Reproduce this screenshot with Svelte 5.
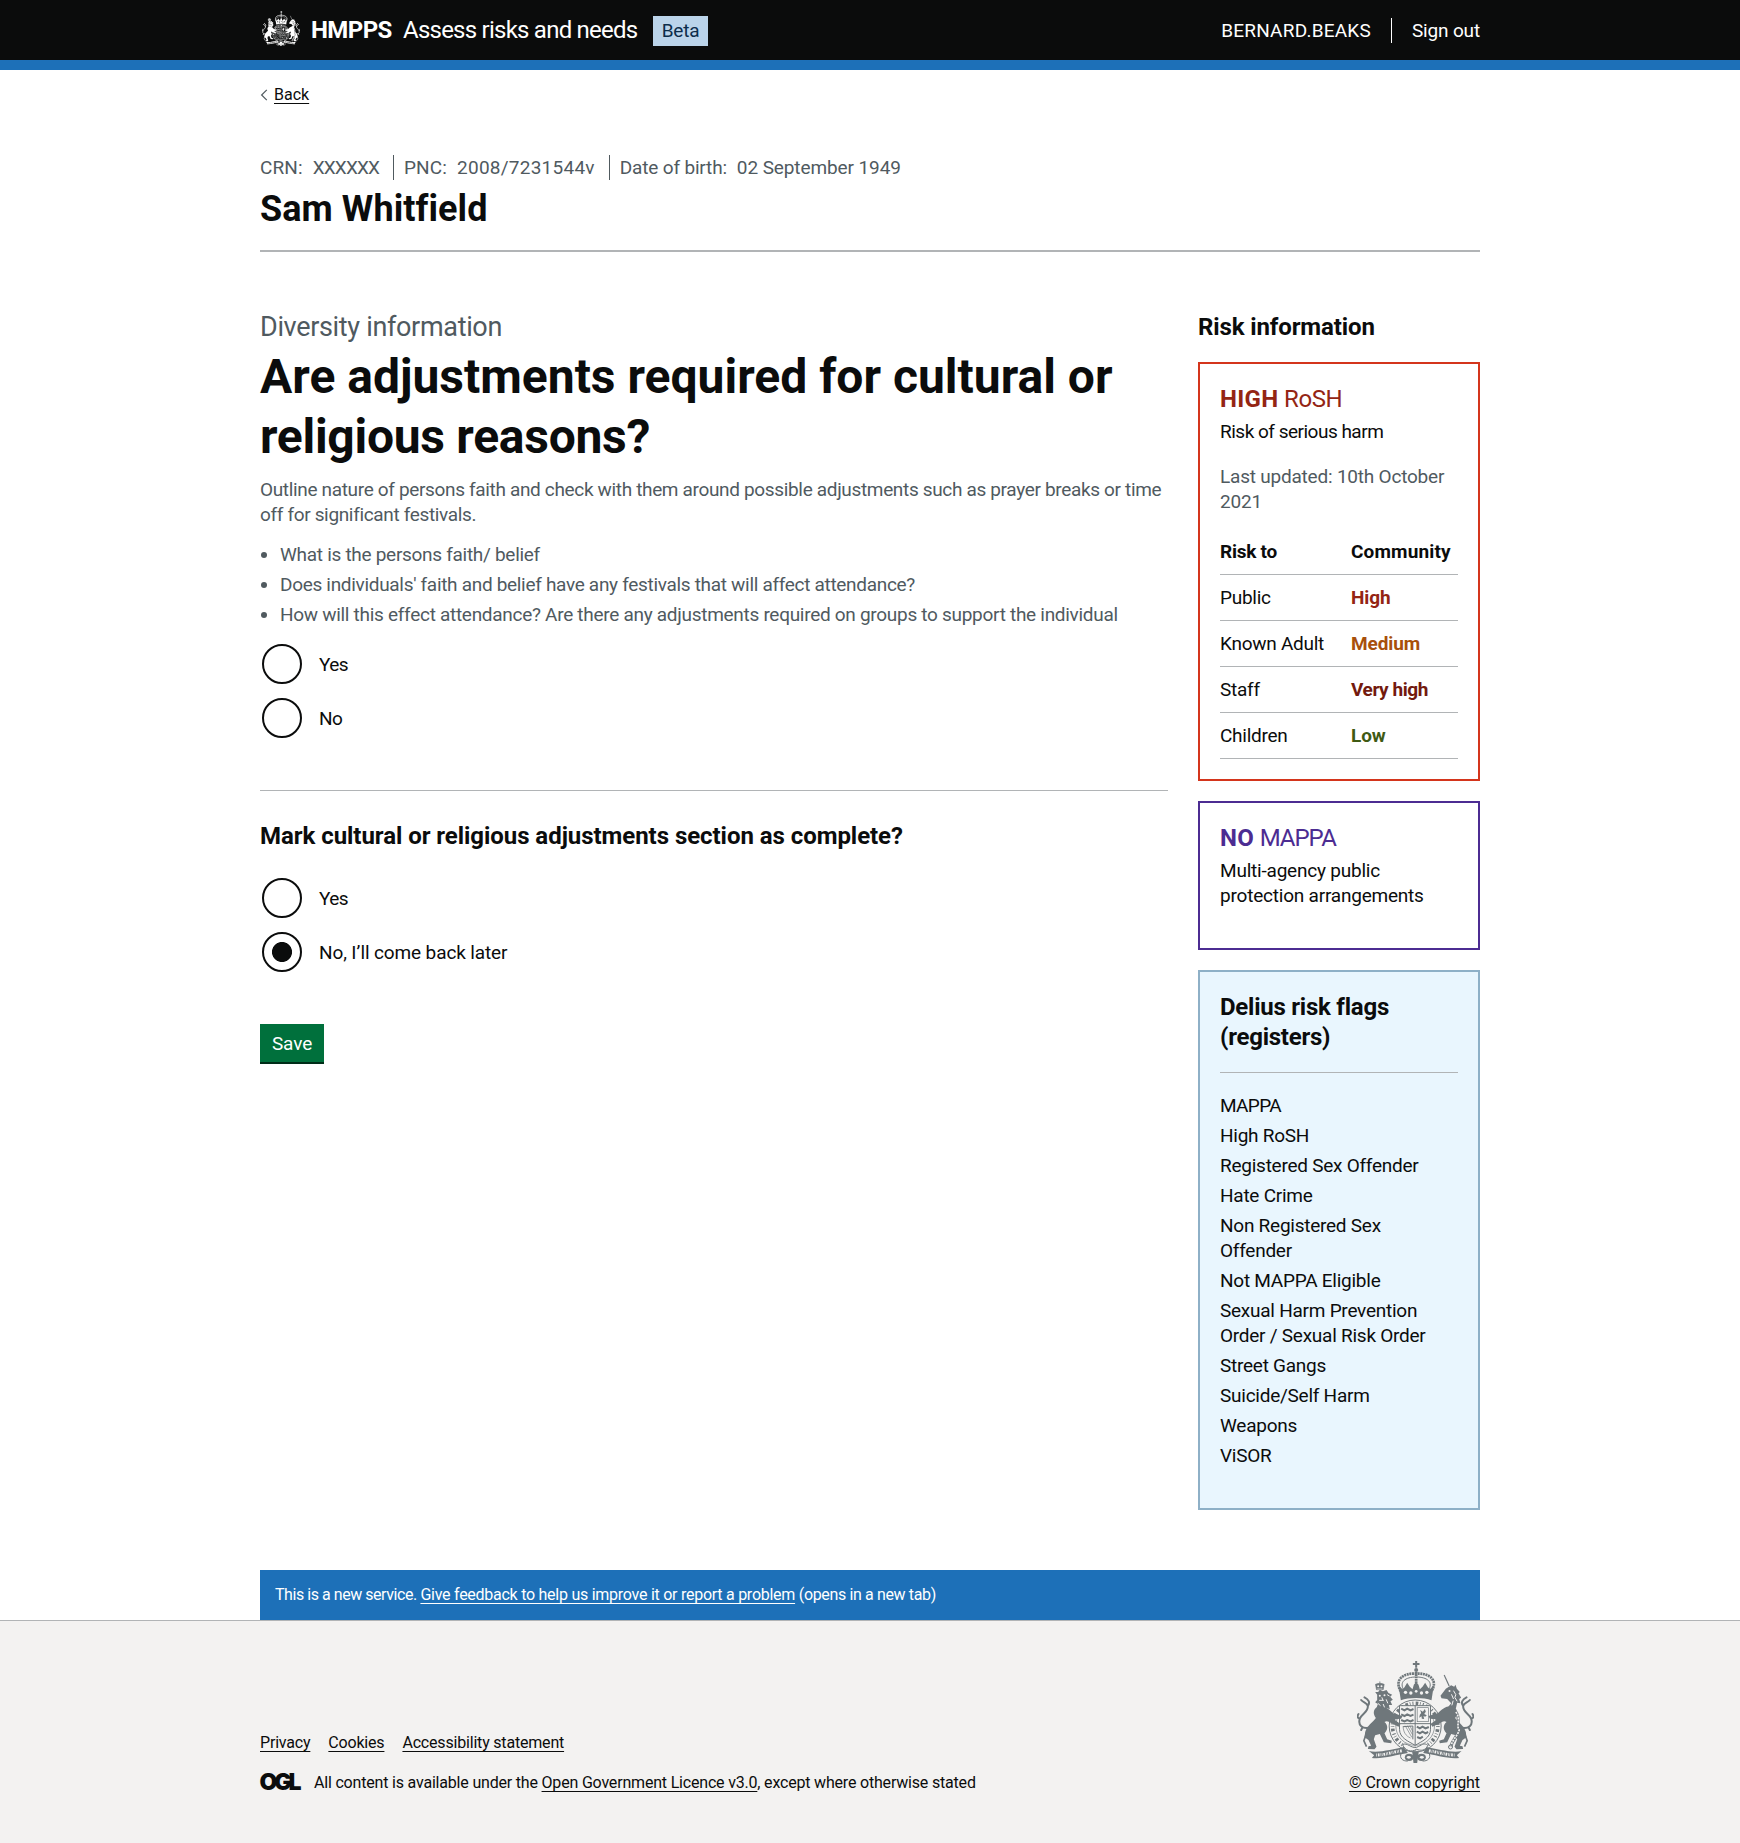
<script>
  let adjustments = $state('');
  let complete = $state('later');

  const hints = [
    { text: 'What is the persons faith/ belief', cls: '' },
    { text: "Does individuals' faith and belief have any festivals that will affect attendance?", cls: 'mid' },
    { text: 'How will this effect attendance? Are there any adjustments required on groups to support the individual', cls: '' }
  ];
  const risks = [
    { to: 'Public', level: 'High', cls: 'high' },
    { to: 'Known Adult', level: 'Medium', cls: 'medium' },
    { to: 'Staff', level: 'Very high', cls: 'very-high' },
    { to: 'Children', level: 'Low', cls: 'low' }
  ];
  const flags = [
    { text: 'MAPPA', cls: 'caps' },
    { text: 'High RoSH' },
    { text: 'Registered Sex Offender' },
    { text: 'Hate Crime' },
    { text: 'Non Registered Sex Offender' },
    { text: 'Not MAPPA Eligible' },
    { text: 'Sexual Harm Prevention Order / Sexual Risk Order' },
    { text: 'Street Gangs' },
    { text: 'Suicide/Self Harm' },
    { text: 'Weapons' },
    { text: 'ViSOR' }
  ];
</script>

{#snippet supporter()}
  <!-- tail -->
  <path d="M92 232 C64 240 52 224 58 206 C64 190 84 186 82 168 C80 158 68 158 62 150 M82 168 C90 158 84 148 72 142 M58 206 C50 204 50 198 54 192 M66 232 L62 240" fill="none" stroke="currentColor" stroke-width="6" stroke-linecap="round" />
  <!-- torso and hind legs -->
  <path d="M112 170 C128 164 146 176 158 190 L186 198 L182 206 L160 208 L180 222 L174 230 L150 218 C144 214 138 212 132 216 C144 226 142 240 132 250 L140 268 L154 272 L152 280 L130 277 L118 252 L104 256 L100 268 L108 290 L102 298 L82 297 L84 289 L92 287 L84 270 L72 262 L74 246 C80 226 98 216 106 204 C98 192 96 178 112 170 Z" fill="currentColor" />
  <path d="M78 250 L70 272 L78 290" fill="none" stroke="currentColor" stroke-width="5" />
{/snippet}

{#snippet arms()}
  <!-- crown -->
  <path d="M224 33h6v6h7v6h-7v8h-6v-8h-7v-6h7z" fill="currentColor" />
  <circle cx="227" cy="60" r="6" fill="currentColor" />
  <g fill="none" stroke="currentColor">
    <path d="M181 124 C160 90 188 68 227 71 C266 68 294 90 273 124" stroke-width="8" stroke-dasharray="6 2" />
    <path d="M191 122 C174 96 194 81 227 81 C260 81 280 96 263 122" stroke-width="3" />
    <path d="M227 66 V108" stroke-width="8" stroke-dasharray="5 2" />
  </g>
  <path d="M174 106 L186 118 L192 112 L200 98 L208 110 L216 118 L220 104 L227 96 L234 104 L238 118 L246 110 L254 98 L262 112 L268 118 L280 106 L273 151 C250 142 204 142 181 151 Z" fill="currentColor" />
  <g class="cut">
    <circle cx="195" cy="127" r="5" /><circle cx="211" cy="129" r="5" /><circle cx="227" cy="124" r="4" /><circle cx="243" cy="129" r="5" /><circle cx="259" cy="127" r="5" />
  </g>
  <!-- garter -->
  <g fill="none" stroke="currentColor">
    <circle cx="224" cy="228" r="78" stroke-width="3" />
    <circle cx="224" cy="228" r="58" stroke-width="2" />
    <circle cx="224" cy="228" r="68" stroke-width="11" stroke-dasharray="3 7 8 5 2 6" />
  </g>
  <!-- shield -->
  <path d="M177 167 H270 V238 C270 264 244 274 224 286 C204 274 177 264 177 238 Z" class="field" stroke="currentColor" stroke-width="3" />
  <path d="M224 167 V285 M177 221 H270" stroke="currentColor" stroke-width="3" fill="none" />
  <g fill="none" stroke="currentColor" stroke-width="6">
    <path d="M182 176 l10 5 l8 -5 l10 5 l9 -4 M182 193 l10 5 l8 -5 l10 5 l9 -4 M182 210 l10 4 l8 -4 l10 4 l9 -4" />
    <path d="M229 230 l9 5 l8 -5 l9 5 l10 -4 M229 245 l9 5 l8 -5 l9 5 l8 -4 M230 261 l9 4 l8 -5" />
  </g>
  <g fill="none" stroke="currentColor" stroke-width="2">
    <rect x="230" y="173" width="34" height="42" />
    <path d="M188 228 C188 246 196 258 210 264 M194 227 L214 262 M201 227 L216 254 M208 227 L217 245" />
    <path d="M188 230 L217 228 V268" stroke-width="3" />
  </g>
  <path d="M239 180 l8 5 l6 -8 l3 8 l-5 7 l8 4 l-5 4 l-5 -2 l2 9 l-7 -1 l-1 -7 l-7 4 l2 -9 l4 -5 z" fill="currentColor" />
  <!-- lion -->
  {@render supporter()}
  <path d="M110 134 L104 126 L113 126 L118 119 L127 124 L138 120 L144 129 L155 134 L149 140 L157 149 L150 154 L155 165 L145 165 L148 178 L136 173 L126 182 L119 172 L108 174 L112 162 L104 157 L110 150 Z" fill="currentColor" />
  <path d="M105 103 Q118 96 131 103 L128 119 H108 Z M118 94 v8" fill="currentColor" stroke="currentColor" stroke-width="2" />
  <g class="cut"><circle cx="118" cy="137" r="3" /><circle cx="132" cy="136" r="3" /><circle cx="113" cy="109" r="3" /><circle cx="123" cy="109" r="3" /><path d="M116 151 h14 M124 142 l3 8 M112 160 l8 7 M137 148 l5 12 M128 162 l4 10 M140 134 l7 4" fill="none" stroke-width="3" /><path d="M110 117 h16" fill="none" stroke-width="2" /></g>
  <!-- unicorn -->
  <g transform="matrix(-1 0 0 1 450 0)">{@render supporter()}</g>
  <path d="M311 75 L326 108" stroke="currentColor" stroke-width="3.5" fill="none" />
  <path d="M300 137 L316 116 L332 106 L341 110 L345 104 L349 116 L358 126 L354 130 L362 143 L356 147 L360 160 L350 158 L346 176 L318 177 L332 160 L320 147 L303 145 Z" fill="currentColor" />
  <g class="cut"><circle cx="327" cy="123" r="3" /><path d="M339 122 l7 12 l-3 8 l7 12 M333 133 l6 14 M338 152 l-4 14" fill="none" stroke-width="3" /></g>
  <path d="M346 186 C362 206 346 226 356 240 C352 258 336 266 331 290" fill="none" stroke="currentColor" stroke-width="9" />
  <path d="M346 186 C362 206 346 226 356 240 C352 258 336 266 331 290" class="chain" fill="none" stroke-width="5" stroke-dasharray="6 3" />
  <circle cx="330" cy="291" r="6" fill="none" stroke="currentColor" stroke-width="3" />
  <!-- motto ribbon -->
  <path d="M85 303 C114 310 158 297 190 291 L202 309 C166 314 128 328 94 324 L101 316 Z" fill="currentColor" />
  <path d="M363 303 C336 310 292 297 258 291 L248 309 C286 314 322 328 356 324 L349 316 Z" fill="currentColor" />
  <g class="cut">
    <path d="M107 315 C134 315 156 306 185 302 M342 315 C316 315 292 306 264 302" fill="none" stroke-width="9" stroke-dasharray="2 3 5 3 2 2" />
  </g>
  <g fill="none" stroke="currentColor" stroke-width="3">
    <path d="M186 284 C200 276 212 296 228 292 C244 286 250 276 262 286 C254 304 240 302 228 298 C212 308 194 302 186 284 Z" class="field" />
    <path d="M182 310 C176 324 186 334 202 333 M266 310 C272 324 262 334 246 333" />
  </g>
  <ellipse cx="206" cy="322" rx="13" ry="11" fill="currentColor" /><ellipse cx="243" cy="322" rx="13" ry="11" fill="currentColor" />
  <g class="cut"><ellipse cx="205" cy="322" rx="6" ry="4" /><ellipse cx="244" cy="322" rx="6" ry="4" /></g>
  <path d="M215 304 H235 L230 339 H219 Z" fill="currentColor" />
{/snippet}

{#snippet radio(id, name, label, checked, choose)}
  <div class="radio">
    <input type="radio" {id} {name} {checked} onchange={choose} />
    <label for={id} class:short={label.length < 5}>{label}</label>
  </div>
{/snippet}

<header class="header">
  <div class="container header-row">
    <svg class="header-arms" viewBox="50 33 350 306" preserveAspectRatio="none" aria-hidden="true">{@render arms()}</svg>
    <strong class="org">HMPPS</strong>
    <span class="service">Assess risks and needs</span>
    <strong class="tag">Beta</strong>
    <nav class="account">
      <span class="user">BERNARD.BEAKS</span>
      <a class="signout" href="#signout">Sign out</a>
    </nav>
  </div>
</header>

<div class="container page">
  <a class="back" href="#back">
    <svg viewBox="0 0 8 12" width="8" height="12" aria-hidden="true"><path d="M6.8 .8 L1.6 6 L6.8 11.2" fill="none" stroke="#505a5f" stroke-width="1.2" /></svg>
    <span class="link">Back</span>
  </a>

  <section class="person">
    <ul class="ids">
      <li><span class="key">CRN:</span><span class="crn">XXXXXX</span></li>
      <li><span class="key">PNC:</span><span class="pnc">2008/7231544v</span></li>
      <li><span>Date of birth:</span><span class="dob">02 September 1949</span></li>
    </ul>
    <h2>Sam Whitfield</h2>
  </section>

  <div class="columns">
    <main>
      <span class="caption">Diversity information</span>
      <h1>Are adjustments required for cultural or <span class="tight">religious reasons?</span></h1>
      <p class="hint">Outline nature of persons faith and check with them around possible adjustments such as prayer breaks or time off for significant festivals.</p>
      <ul class="hints">
        {#each hints as h}<li class={h.cls}>{h.text}</li>{/each}
      </ul>
      <div class="radios">
        {@render radio('adj-yes', 'adjustments', 'Yes', adjustments === 'yes', () => (adjustments = 'yes'))}
        {@render radio('adj-no', 'adjustments', 'No', adjustments === 'no', () => (adjustments = 'no'))}
      </div>
      <hr />
      <h3 class="question">Mark cultural or religious adjustments section as complete?</h3>
      <div class="radios second">
        {@render radio('done-yes', 'complete', 'Yes', complete === 'yes', () => (complete = 'yes'))}
        {@render radio('done-later', 'complete', 'No, I’ll come back later', complete === 'later', () => (complete = 'later'))}
      </div>
      <button type="button">Save</button>
    </main>

    <aside>
      <h3>Risk information</h3>
      <section class="card rosh">
        <h4><strong>HIGH</strong> RoSH</h4>
        <p class="serious">Risk of serious harm</p>
        <p class="updated">Last updated: 10th October 2021</p>
        <table>
          <thead><tr><th>Risk to</th><th class="community">Community</th></tr></thead>
          <tbody>
            {#each risks as r}
              <tr><td>{r.to}</td><td class="level {r.cls}">{r.level}</td></tr>
            {/each}
          </tbody>
        </table>
      </section>
      <section class="card mappa">
        <h4><strong>NO</strong> <span class="caps">MAPPA</span></h4>
        <p>Multi-agency public protection arrangements</p>
      </section>
      <section class="card flags">
        <h3>Delius risk flags (registers)</h3>
        <ul>
          {#each flags as f}<li class={f.cls}>{f.text}</li>{/each}
        </ul>
      </section>
    </aside>
  </div>

  <div class="feedback">
    <span class="new">This is a new service.</span> <a class="link" href="#feedback">Give feedback to help us improve it or report a problem</a> <span class="tab">(opens in a new tab)</span>
  </div>
</div>

<footer>
  <div class="container footer-row">
    <div class="meta">
      <nav>
        <a class="link" href="#privacy">Privacy</a>
        <a class="link" href="#cookies">Cookies</a>
        <a class="link" href="#accessibility">Accessibility statement</a>
      </nav>
      <div class="licence">
        <svg width="41" height="18" viewBox="0 0 41 18" role="img" aria-label="OGL"><text x="-0.5" y="16.6" textLength="42" lengthAdjust="spacing">OGL</text></svg>
        <span>All content is available under the <a class="link" href="#ogl">Open Government Licence v3.0</a>, except where otherwise stated</span>
      </div>
    </div>
    <a class="crown" href="#crown">
      <svg viewBox="50 33 350 306" width="117" height="102" aria-hidden="true">{@render arms()}</svg>
      <span class="link">© Crown copyright</span>
    </a>
  </div>
</footer>

<style>
  :global(body) {
    background: #fff;
    color: #0b0c0c;
    font: 400 19px/25px Roboto, 'Liberation Sans', sans-serif;
    letter-spacing: -0.26px;
  }
  h1, h2, h3, h4, p, ul { margin: 0; padding: 0; }
  ul { list-style: none; }
  a { color: inherit; text-decoration: none; }
  .link {
    text-decoration: underline;
    text-decoration-thickness: 1px;
    text-underline-offset: 3px;
    text-decoration-skip-ink: none;
  }
  .container { width: 1220px; margin: 0 auto; }
  .cut { fill: var(--bg); stroke: var(--bg); stroke-width: 0; }
  .field { fill: var(--bg); }
  .chain { stroke: var(--bg); }

  .header { --bg: #0b0c0c; background: #0b0c0c; color: #fff; border-bottom: 10px solid #1d70b8; }
  .header-row { display: flex; align-items: center; height: 60px; }
  .header-arms { width: 38px; height: 35px; margin: 0 11px 4px 2px; }
  .org { font-size: 24px; line-height: 30px; letter-spacing: -0.6px; width: 92px; }
  .service { font-size: 24px; line-height: 30px; letter-spacing: -0.76px; width: 250px; }
  .tag {
    box-sizing: border-box;
    width: 55px; height: 30px; line-height: 29px; margin-top: 2px;
    text-align: center; font-weight: 400; background: #bbd4ea; color: #0c2d4a;
  }
  .account { display: flex; align-items: center; margin-left: auto; }
  .user { letter-spacing: 0.22px; padding-right: 20px; border-right: 1px solid #fff; }
  .signout { padding-left: 20px; letter-spacing: -0.16px; }

  .back { display: flex; align-items: center; gap: 6px; margin-top: 15px; font-size: 16px; line-height: 20px; letter-spacing: 0; }
  .person { margin-top: 50px; padding-bottom: 21px; border-bottom: 2px solid #b1b4b6; color: #505a5f; }
  .ids { display: flex; letter-spacing: -0.17px; }
  .ids li { display: flex; gap: 10px; }
  .ids li + li { margin-left: 14px; padding-left: 10px; border-left: 1px solid #505a5f; }
  .key { letter-spacing: 0.15px; }
  .crn { letter-spacing: -0.9px; }
  .pnc { letter-spacing: 0.25px; }
  .dob { letter-spacing: -0.1px; }
  h2 { margin-top: 9px; color: #0b0c0c; font-size: 36px; line-height: 40px; letter-spacing: 0.07px; }

  .columns { display: grid; grid-template-columns: 908px 282px; justify-content: space-between; margin-top: 60px; }
  .caption { display: block; color: #505a5f; font-size: 27px; line-height: 30px; letter-spacing: -0.33px; }
  h1 { margin-top: 5px; font-size: 48px; line-height: 60px; letter-spacing: 0; }
  .tight { letter-spacing: -0.28px; }
  .hint { margin-top: 10px; color: #505a5f; letter-spacing: -0.34px; }
  .hints { margin-top: 15px; padding-left: 20px; list-style: disc; color: #505a5f; letter-spacing: -0.29px; }
  .hints li + li { margin-top: 5px; }
  .hints .mid { letter-spacing: -0.31px; }
  .radios { display: flex; flex-direction: column; gap: 14px; margin: 17px 0 52px 2px; }
  .radios.second { margin-top: 20px; padding-top: 7px; }
  .radio { display: flex; align-items: center; gap: 17px; height: 40px; letter-spacing: -0.12px; }
  .radio .short { letter-spacing: -0.6px; }
  .radio input {
    appearance: none; box-sizing: border-box; width: 40px; height: 40px; margin: 0;
    border: 2px solid #0b0c0c; border-radius: 50%; background: #fff;
  }
  .radio input:checked { background: radial-gradient(circle, #0b0c0c 9.6px, #fff 10.4px); }
  hr { height: 1px; margin: 0; border: 0; background: #b1b4b6; }
  h3 { font-size: 24px; line-height: 30px; letter-spacing: -0.12px; }
  .question { margin-top: 30px; letter-spacing: -0.05px; }
  button {
    display: block; width: 64px; height: 38px; padding: 0; border: 0; color: #fff; background: #00703c;
    box-shadow: 0 2px 0 #002d18; font: inherit; letter-spacing: -0.1px;
  }

  .card { border: 2px solid; padding: 20px; margin-top: 20px; }
  .card h4 { font-size: 24px; line-height: 30px; font-weight: 400; letter-spacing: -0.4px; }
  .card h4 strong { letter-spacing: 0.3px; }
  .card h4 .caps { letter-spacing: -1px; }
  .card p { margin-top: 5px; color: #0b0c0c; letter-spacing: -0.21px; }
  .rosh { border-color: #d4351c; }
  .rosh h4 { color: #942514; }
  .card .serious { letter-spacing: -0.5px; }
  .card .updated { margin-top: 20px; color: #505a5f; }
  table { width: 238px; margin-top: 15px; border-collapse: separate; border-spacing: 0; }
  th, td { height: 25px; padding: 10px 0; border-bottom: 1px solid #b1b4b6; text-align: left; }
  th:first-child, td:first-child { width: 131px; }
  th { letter-spacing: -0.25px; }
  .community { letter-spacing: 0.15px; }
  .level { font-weight: 700; letter-spacing: -0.12px; }
  .high { color: #942514; }
  .medium { color: #a8500b; }
  .very-high { color: #731a0e; letter-spacing: -0.43px; }
  .low { color: #3f5a14; }
  .mappa { height: 105px; border-color: #4c2c92; }
  .mappa h4 { color: #4c2c92; }
  .mappa p { width: 215px; }
  .flags { height: 496px; border-color: #8eb0c7; background: #e9f6fe; }
  .flags h3 { padding-bottom: 20px; border-bottom: 1px solid #b1b4b6; letter-spacing: -0.24px; }
  .flags ul { width: 218px; margin-top: 20px; letter-spacing: -0.25px; }
  .flags li + li { margin-top: 5px; }
  .flags .caps { letter-spacing: -0.65px; }

  .feedback {
    margin-top: 60px; padding: 15px; color: #fff; background: #1d70b8;
    font-size: 16px; line-height: 20px; letter-spacing: -0.26px;
  }
  .new { letter-spacing: -0.45px; }
  .tab { letter-spacing: -0.36px; }
  footer { --bg: #f3f2f1; height: 222px; border-top: 1px solid #b1b4b6; background: #f3f2f1; font-size: 16px; line-height: 20px; letter-spacing: -0.19px; }
  .footer-row { display: flex; justify-content: space-between; align-items: flex-end; height: 172px; }
  .meta nav { display: flex; gap: 18px; }
  .licence { display: flex; gap: 13px; margin-top: 20px; }
  .licence svg { overflow: visible; }
  .licence text { font: 900 23px Inter, sans-serif; letter-spacing: 0; fill: #0b0c0c; }
  .crown { display: flex; flex-direction: column; align-items: flex-end; letter-spacing: -0.09px; }
  .crown svg { margin: 0 6px 10px 0; color: #6f777b; }
</style>
